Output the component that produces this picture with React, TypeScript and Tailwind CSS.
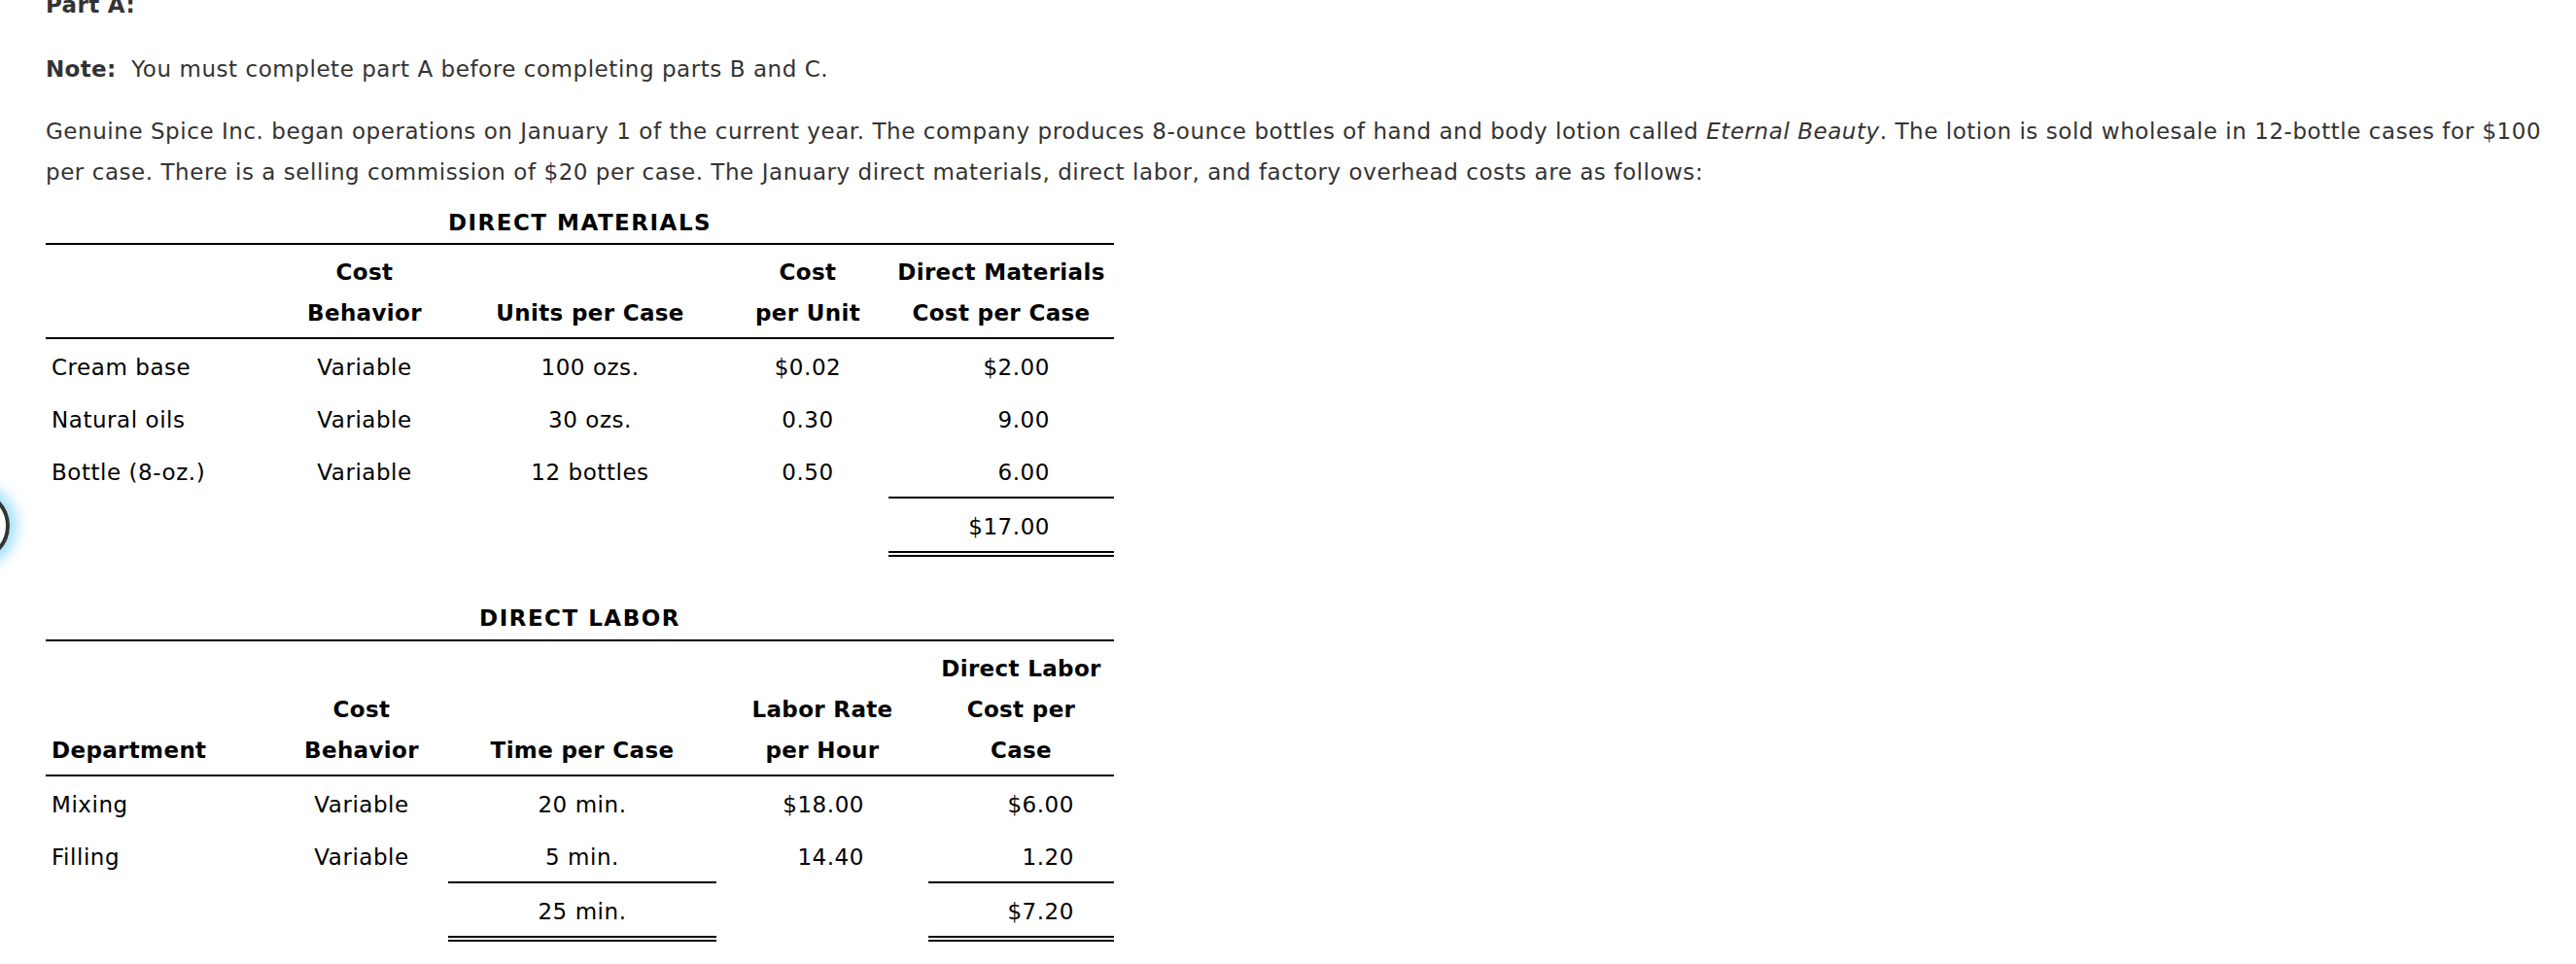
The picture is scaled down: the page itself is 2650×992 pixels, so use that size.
import React from "react";

type Align = "left" | "center" | "right";

const dmCols = "grid grid-cols-[237px_182px_282px_166px_232px]";
const dlCols = "grid grid-cols-[236px_178px_276px_218px_191px]";

function HeadCell({ children, align = "center" }: { children?: React.ReactNode; align?: Align }) {
  const a = align === "left" ? "text-left pl-[6px]" : "text-center";
  return <div className={`self-end font-bold tracking-[0.35px] ${a}`}>{children}</div>;
}

function Cell({
  children,
  className = "",
}: {
  children?: React.ReactNode;
  className?: string;
}) {
  return <div className={`pt-[8px] pb-[4px] ${className}`}>{children}</div>;
}

function DirectMaterials() {
  const rows = [
    ["Cream base", "Variable", "100 ozs.", "$0.02", "$2.00"],
    ["Natural oils", "Variable", "30 ozs.", "0.30", "9.00"],
    ["Bottle (8-oz.)", "Variable", "12 bottles", "0.50", "6.00"],
  ];
  return (
    <div className="mt-[10px] w-[1099px] text-black">
      <div className="text-center font-bold tracking-[1.5px]">DIRECT MATERIALS</div>
      <div className={`${dmCols} border-t-2 border-b-2 border-black pt-[7px] pb-[4px]`}>
        <HeadCell align="left" />
        <HeadCell>
          Cost
          <br />
          Behavior
        </HeadCell>
        <HeadCell>Units per Case</HeadCell>
        <HeadCell>
          Cost
          <br />
          per Unit
        </HeadCell>
        <HeadCell>
          Direct Materials
          <br />
          Cost per Case
        </HeadCell>
      </div>
      {rows.map((r) => (
        <div key={r[0]} className={dmCols}>
          <Cell className="pl-[6px]">{r[0]}</Cell>
          <Cell className="text-center">{r[1]}</Cell>
          <Cell className="text-center">{r[2]}</Cell>
          <Cell className="text-center">{r[3]}</Cell>
          <Cell className="text-right pr-[66px]">{r[4]}</Cell>
        </div>
      ))}
      <div className={dmCols}>
        <div />
        <div />
        <div />
        <div />
        <Cell className="text-right pr-[66px] border-t-2 border-b-[6px] border-double border-black">
          $17.00
        </Cell>
      </div>
    </div>
  );
}

function DirectLabor() {
  const rows = [
    ["Mixing", "Variable", "20 min.", "$18.00", "$6.00"],
    ["Filling", "Variable", "5 min.", "14.40", "1.20"],
  ];
  return (
    <div className="mt-[42px] w-[1099px] text-black">
      <div className="mb-[1px] text-center font-bold tracking-[1.5px]">DIRECT LABOR</div>
      <div className={`${dlCols} border-t-2 border-b-2 border-black pt-[7px] pb-[4px]`}>
        <HeadCell align="left">Department</HeadCell>
        <HeadCell>
          Cost
          <br />
          Behavior
        </HeadCell>
        <HeadCell>Time per Case</HeadCell>
        <HeadCell>
          Labor Rate
          <br />
          per Hour
        </HeadCell>
        <HeadCell>
          Direct Labor
          <br />
          Cost per
          <br />
          Case
        </HeadCell>
      </div>
      {rows.map((r) => (
        <div key={r[0]} className={dlCols}>
          <Cell className="pl-[6px]">{r[0]}</Cell>
          <Cell className="text-center">{r[1]}</Cell>
          <Cell className="text-center">{r[2]}</Cell>
          <Cell className="text-right pr-[66px]">{r[3]}</Cell>
          <Cell className="text-right pr-[41px]">{r[4]}</Cell>
        </div>
      ))}
      <div className={dlCols}>
        <div />
        <div />
        <Cell className="text-center border-t-2 border-b-[6px] border-double border-black">25 min.</Cell>
        <div />
        <Cell className="text-right pr-[41px] border-t-2 border-b-[6px] border-double border-black">
          $7.20
        </Cell>
      </div>
    </div>
  );
}

export default function App() {
  return (
    <div className="relative h-[992px] overflow-hidden bg-white font-['DejaVu_Sans',Verdana,sans-serif] text-[23px] leading-[42px] tracking-[0.55px] text-[#333]">
      {/* focus ring peeking in from the left edge */}
      <div className="absolute left-[-64px] top-[504px] h-[74px] w-[74px] rounded-full border-4 border-[#333] shadow-[0_0_14px_7px_rgba(79,195,247,0.55)]" />

      <div className="-mt-[16px] pl-[47px] pr-[10px]">
        <p className="font-bold tracking-[0.35px]">Part A:</p>
        <p className="mt-[24px]">
          <b className="tracking-[0.35px]">Note:</b>&nbsp; You must complete part A before completing parts B and C.
        </p>
        <p className="mt-[22px]">
          Genuine Spice Inc. began operations on January 1 of the current year. The company produces
          8-ounce bottles of hand and body lotion called <i>Eternal Beauty</i>. The lotion is sold
          wholesale in 12-bottle cases for $100 per case. There is a selling commission of $20 per
          case. The January direct materials, direct labor, and factory overhead costs are as follows:
        </p>
        <DirectMaterials />
        <DirectLabor />
      </div>
    </div>
  );
}
